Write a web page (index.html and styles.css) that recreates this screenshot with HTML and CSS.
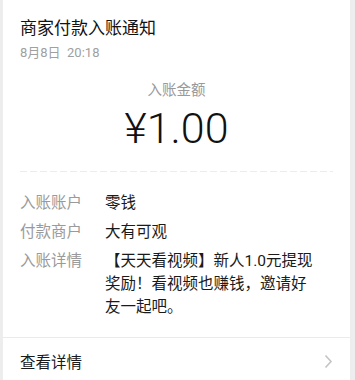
FILE: index.html
```html
<!DOCTYPE html>
<html lang="zh-CN">
<head>
    <meta charset="UTF-8">
    <meta name="viewport" content="width=device-width, initial-scale=1.0">
    <title>商家付款入账通知</title>
    <link rel="stylesheet" href="styles.css">
</head>
<body>
    <div class="card">
        <div class="head">
            <div class="title">商家付款入账通知</div>
            <div class="time">8月8日&nbsp; 20:18</div>
        </div>

        <div class="amount-block">
            <div class="amount-label">入账金额</div>
            <div class="amount">¥1.00</div>
        </div>

        <div class="dash-line"></div>

        <div class="details">
            <div class="row">
                <div class="label">入账账户</div>
                <div class="value">零钱</div>
            </div>
            <div class="row">
                <div class="label">付款商户</div>
                <div class="value">大有可观</div>
            </div>
            <div class="row">
                <div class="label">入账详情</div>
                <div class="value">【天天看视频】新人1.0元提现奖励！看视频也赚钱，邀请好友一起吧。</div>
            </div>
        </div>

        <div class="more">
            <span>查看详情</span>
            <svg class="arrow" width="9" height="15" viewBox="0 0 9 15">
                <path d="M1.5 1.5 L7 7.5 L1.5 13.5" fill="none" stroke="#c4c4c4" stroke-width="1.6"/>
            </svg>
        </div>
    </div>
</body>
</html>
```

FILE: styles.css
```css
body {
    margin: 0;
    padding: 0 5px 0 3px;
    background-color: #ededed; /* page gray showing at the sides */
    font-family: Roboto, "Noto Sans CJK SC", sans-serif;
    color: #1a1a1a;
}
.card {
    background-color: #fff;
    min-height: 100vh;
}
.head {
    padding: 16px 17px 0;
}
.title {
    font-size: 17px;
    line-height: 24px;
    color: #111;
}
.time {
    font-size: 13px;
    line-height: 18px;
    margin-top: 4px;
    color: #a0a0a0;
}
.amount-block {
    text-align: center;
    margin-top: 19px;
}
.amount-label {
    font-size: 14.5px;
    line-height: 20px;
    color: #9a9a9a;
}
.amount {
    font-size: 43px;
    font-weight: 300;
    line-height: 50px;
    margin-top: 2px;
    color: #111;
}
.dash-line {
    height: 1px;
    margin: 18px 17px 0;
    background: repeating-linear-gradient(to right, #ececec 0 7px, transparent 7px 10px);
}
.details {
    padding: 20px 17px 18px;
    display: flex;
    flex-direction: column;
    gap: 6px;
}
.row {
    display: flex;
    font-size: 15.5px;
    line-height: 23px;
}
.label {
    width: 85px;
    flex-shrink: 0;
    color: #9a9a9a;
}
.value {
    width: 208px;
    color: #1a1a1a;
}
.more {
    border-top: 1px solid #ebebeb;
    display: flex;
    align-items: center;
    justify-content: space-between;
    padding: 0 17px;
    height: 46px;
    font-size: 15.5px;
}
.arrow {
    display: block;
}
```
